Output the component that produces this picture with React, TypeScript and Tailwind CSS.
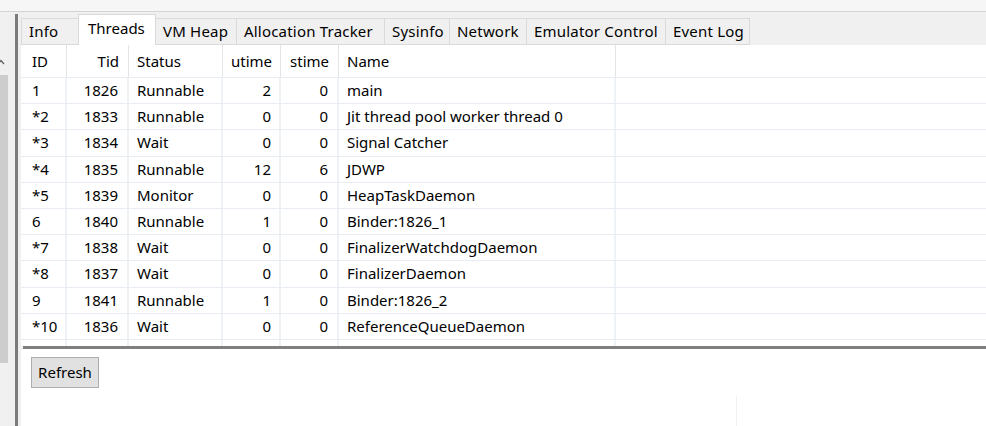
import React from "react";

const tabs = [
  { label: "Info", w: "w-[58px]" },
  { label: "Threads", w: "w-[78px]", active: true },
  { label: "VM Heap", w: "w-[81px]" },
  { label: "Allocation Tracker", w: "w-[148px]" },
  { label: "Sysinfo", w: "w-[65px]" },
  { label: "Network", w: "w-[77px]" },
  { label: "Emulator Control", w: "w-[139px]" },
  { label: "Event Log", w: "w-[84px]" },
];

const rows = [
  ["1", "1826", "Runnable", "2", "0", "main"],
  ["*2", "1833", "Runnable", "0", "0", "Jit thread pool worker thread 0"],
  ["*3", "1834", "Wait", "0", "0", "Signal Catcher"],
  ["*4", "1835", "Runnable", "12", "6", "JDWP"],
  ["*5", "1839", "Monitor", "0", "0", "HeapTaskDaemon"],
  ["6", "1840", "Runnable", "1", "0", "Binder:1826_1"],
  ["*7", "1838", "Wait", "0", "0", "FinalizerWatchdogDaemon"],
  ["*8", "1837", "Wait", "0", "0", "FinalizerDaemon"],
  ["9", "1841", "Runnable", "1", "0", "Binder:1826_2"],
  ["*10", "1836", "Wait", "0", "0", "ReferenceQueueDaemon"],
];

// column widths + alignment
const cols = [
  { name: "ID", w: "w-[46px]", cls: "pl-[11px] text-left" },
  { name: "Tid", w: "w-[62px]", cls: "pr-[9px] text-right" },
  { name: "Status", w: "w-[94px]", cls: "pl-[8px] text-left" },
  { name: "utime", w: "w-[58px]", cls: "pr-[8px] text-right" },
  { name: "stime", w: "w-[58px]", cls: "pr-[9px] text-right" },
  { name: "Name", w: "w-[277px]", cls: "pl-[8px] text-left" },
];

const Tab = ({ label, w, active }: { label: string; w: string; active?: boolean }) =>
  active ? (
    <div className={`${w} h-[31px] bg-white border border-b-0 border-[#d9d9d9] pl-[9px] pt-[2px] leading-[23px] -mx-[1px] z-10`}>
      {label}
    </div>
  ) : (
    <div className={`${w} h-[27px] bg-[#f0f0f0] border border-[#dadada] border-r-0 pl-[7px] leading-[24px] tracking-[0.2px]`}>
      {label}
    </div>
  );

export default function App() {
  return (
    <div
      className="w-[986px] h-[426px] overflow-hidden bg-[#f0f0f0] text-[15px] text-black flex flex-col"
      style={{ fontFamily: '"Noto Sans", "Liberation Sans", sans-serif' }}
    >
      <div className="h-[12px] bg-[#f6f6f6] border-b border-[#d4d4d4] shrink-0" />
      <div className="flex flex-1 min-h-0">
        {/* left scrollbar strip */}
        <div className="w-[15px] relative">
          <svg className="absolute left-[-3px] top-[47px]" width="8" height="6" viewBox="0 0 8 6">
            <path d="M1 5 L4 1.5 L7 5" stroke="#606060" strokeWidth="1.3" fill="none" />
          </svg>
          <div className="absolute left-0 top-[63px] w-[8px] h-[288px] bg-[#cdcdcd]" />
        </div>
        <div className="w-[3px] mt-[2px] bg-[#7b7b7b]" />
        <div className="w-[3px]" />
        <div className="flex-1 flex flex-col min-w-0">
          {/* tabs */}
          <div className="h-[33px] flex items-end pt-[2px]">
            {tabs.map((t) => (
              <Tab key={t.label} {...t} />
            ))}
            <div className="w-[1px] h-[27px] bg-[#dadada]" />
          </div>
          {/* table */}
          <div className="h-[301px] bg-white flex flex-col overflow-hidden">
            <div className="flex h-[32px] shrink-0">
              {cols.map((c) => (
                <div
                  key={c.name}
                  className={`${c.w} ${c.cls} leading-[32px] border-r border-[#e4e4e4] shrink-0`}
                >
                  {c.name}
                </div>
              ))}
            </div>
            {[...rows, ["", "", "", "", "", ""]].map((r, i) => (
              <div key={i} className="flex h-[26.2px] shrink-0 border-t border-[#e8edf3]">
                {cols.map((c, j) => (
                  <div
                    key={j}
                    className={`${c.w} ${c.cls} leading-[25px] border-r-2 border-[#eef2f7] shrink-0 whitespace-nowrap`}
                  >
                    {r[j]}
                  </div>
                ))}
              </div>
            ))}
          </div>
          <div className="h-[3px] ml-[2px] bg-[#7f7f7f] shrink-0" />
          {/* bottom panel */}
          <div className="flex-1 bg-white relative">
            <button className="ml-[10px] mt-[8px] w-[68px] h-[31px] bg-[#e1e1e1] border border-[#adadad] text-[15px] leading-[27px]">
              Refresh
            </button>
            <div className="absolute left-[715px] top-[47px] w-[1px] h-[40px] bg-[#eef2f6]" />
          </div>
        </div>
      </div>
    </div>
  );
}
